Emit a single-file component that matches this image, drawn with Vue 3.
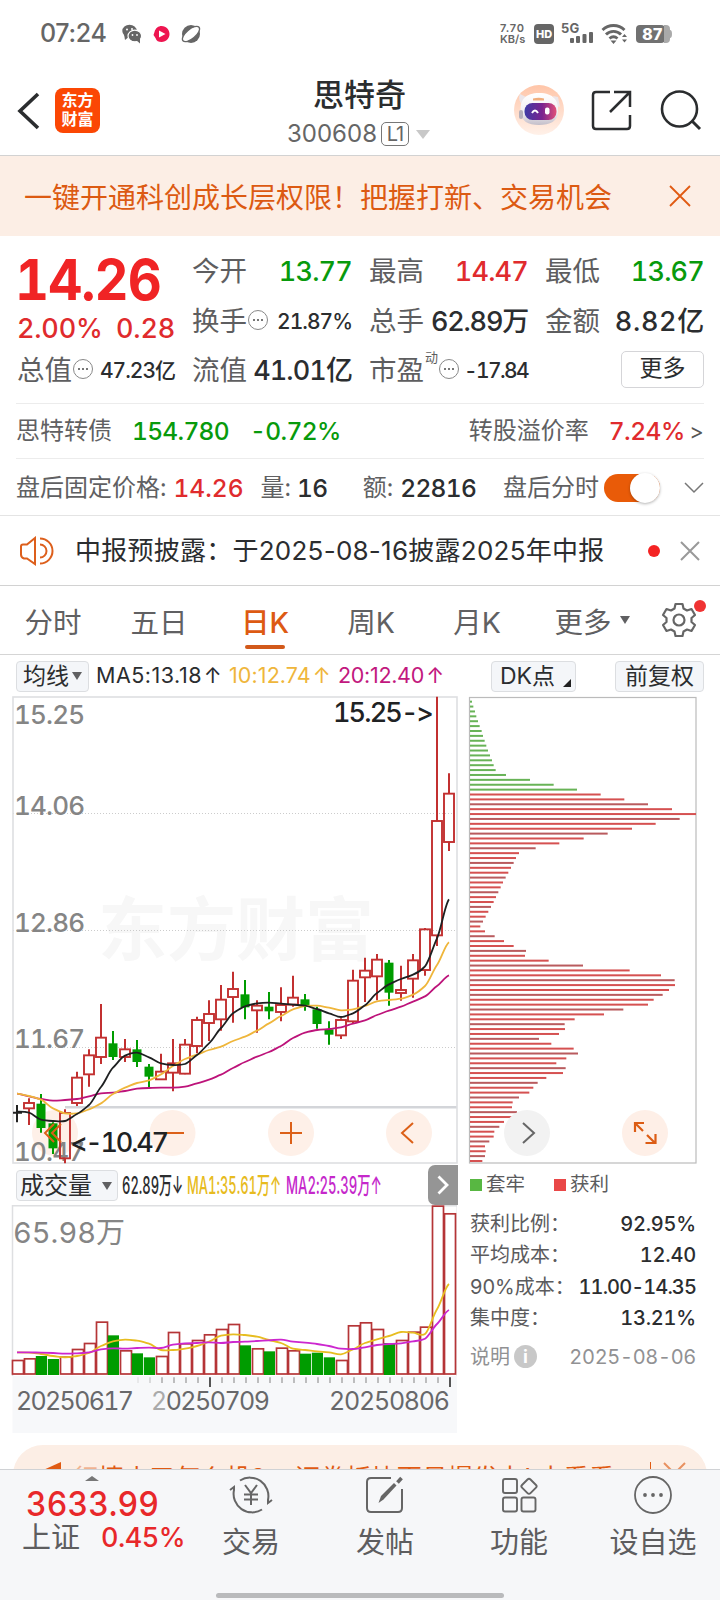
<script setup>
const candles = [
  ['k', 1245, 1268, 1268, 1297], ['r', 1225, 1239, 1255, 1305], ['g', 1212, 1241, 1314, 1328], ['g', 1297, 1300, 1375, 1392],
  ['r', 1258, 1269, 1405, 1420], ['r', 1145, 1163, 1239, 1248], ['r', 1078, 1096, 1153, 1190], ['r', 942, 1043, 1101, 1122],
  ['g', 1023, 1060, 1101, 1110], ['r', 1047, 1078, 1101, 1116], ['g', 1050, 1078, 1116, 1131], ['g', 1122, 1130, 1160, 1193],
  ['r', 1091, 1145, 1168, 1170], ['r', 1047, 1120, 1148, 1204], ['r', 1047, 1064, 1151, 1153], ['r', 980, 990, 1068, 1090],
  ['r', 931, 972, 999, 1053], ['r', 885, 929, 988, 1022], ['r', 845, 897, 921, 998], ['g', 870, 913, 952, 988],
  ['r', 931, 947, 961, 1028], ['g', 906, 950, 964, 988], ['r', 892, 945, 966, 994], ['r', 857, 923, 944, 950],
  ['g', 912, 928, 945, 962], ['g', 950, 958, 1002, 1016], ['g', 994, 1018, 1034, 1064], ['r', 985, 990, 1036, 1047],
  ['r', 839, 872, 994, 1000], ['r', 803, 842, 862, 936], ['r', 792, 809, 859, 931], ['g', 810, 818, 908, 947],
  ['r', 827, 900, 909, 932], ['r', 792, 811, 866, 923], ['r', 714, 718, 840, 857], ['r', 20, 393, 736, 768], ['r', 250, 311, 456, 483]
].map(([t, h, a, b, l], i) => ({ t, x: 17 + i * 12, h: h / 3, a: a / 3, b: b / 3, l: l / 3 }))

const volumes = [600, 595, 588, 597, 590, 567, 549, 485, 526, 571, 580, 592, 588, 516, 550, 540, 523, 507, 492, 556, 565, 574, 563, 571, 581, 578, 592, 600, 496, 487, 507, 549, 540, 515, 500, 137, 160]
  .map((v, i) => ({ x: 17.3 + i * 12, y: v / 3, green: [2, 3, 8, 10, 11, 19, 21, 24, 25, 26, 31].includes(i) }))

const curve = (vals) => {
  const p = vals.map((v, i) => [17 + i * 12, v / 3])
  let d = `M${p[0]}`
  for (let i = 0; i < p.length - 1; i++) {
    const a = p[Math.max(0, i - 1)], b = p[i], c = p[i + 1], e = p[Math.min(p.length - 1, i + 2)]
    d += `C${b[0] + 4} ${b[1] + (c[1] - a[1]) / 8},${c[0] - 4} ${c[1] - (e[1] - b[1]) / 8},${c[0]} ${c[1]}`
  }
  return d
}
const ma5 = curve([1265, 1268, 1289, 1293, 1293, 1272, 1245, 1191, 1133, 1097, 1088, 1102, 1120, 1125, 1122, 1095, 1060, 1014, 970, 949, 940, 938, 941, 944, 947, 957, 970, 981, 970, 946, 909, 883, 867, 854, 829, 745, 628])
const ma10 = curve([1211, 1218, 1229, 1255, 1270, 1270, 1258, 1240, 1212, 1193, 1179, 1171, 1153, 1128, 1107, 1094, 1080, 1070, 1053, 1040, 1022, 1000, 978, 958, 948, 947, 953, 961, 958, 948, 934, 930, 926, 914, 888, 825, 757])
const ma20 = curve([1211, 1219, 1227, 1232, 1230, 1227, 1219, 1210, 1208, 1203, 1196, 1194, 1193, 1193, 1190, 1180, 1169, 1154, 1134, 1116, 1100, 1086, 1068, 1044, 1028, 1020, 1017, 1012, 1001, 991, 975, 962, 950, 935, 919, 888, 856])
const vma1 = curve([577, 578, 582, 588, 592, 588, 579, 558, 544, 539, 542, 551, 570, 570, 566, 558, 545, 527, 523, 525, 530, 540, 549, 566, 570, 574, 577, 583, 568, 549, 538, 528, 516, 518, 522, 448, 372])
const vma2 = curve([577, 577, 578, 579, 581, 580, 577, 568, 565, 566, 564, 563, 564, 554, 550, 549, 547, 549, 546, 545, 543, 541, 539, 545, 548, 552, 558, 566, 567, 562, 555, 552, 550, 544, 536, 492, 450])

const chips = [36, 40, 45, 49, 54, 59, 65, 69, 74, 79, 84, 90, 96, 101, 107, 138, 210, 281, 351,
  422, 493, 564, 636, 708, 659, 587, 516, 443, 371, 298, 227, 177, 168, 161, 153, 145, 137, 129, 122, 115, 108, 101, 93, 85, 77, 69, 61, 75, 104, 132, 161, 198, 195, 266, 369, 509, 603, 644, 645, 627, 608, 581, 564, 490, 432, 344, 314, 315, 297, 237, 274, 341, 354, 319, 289, 317, 309, 259, 233, 220, 208, 177, 158, 156, 171, 160, 132, 118, 103, 101, 88, 75, 77, 75, 67]
  .map((e, i) => ({ y: (35 + i * 14.66) / 3 - 1, w: (e - 30) / 3, green: i < 19 }))

const ticks = Array.from({ length: 27 }, (_, i) => ({ x: 138 + i * 12, long: i === 6 || i === 26, o: i === 0 ? 0.25 : i === 1 ? 0.5 : 1 }))
const tabs = ['分时', '五日', '日K', '周K', '月K', '更多']
const stats = [['获利比例：', '92.95%'], ['平均成本：', '12.40'], ['90%成本：', '11.00-14.35'], ['集中度：', '13.21%']]
</script>

<template>
  <div class="page">
    <div class="status">
      <span class="time">07:24</span>
      <svg class="s-left" width="84" height="24" viewBox="0 0 84 24">
        <g fill="#666">
          <ellipse cx="7.500" cy="9" rx="7.200" ry="6.300" /><path d="M2 12l1 6 5-4z" />
          <ellipse cx="12.800" cy="14" rx="6.800" ry="5.800" stroke="#fff" stroke-width="1.200" /><path d="M14 18l4 3.500v-5z" />
        </g>
        <g fill="#fff"><circle cx="5" cy="7.500" r="1" /><circle cx="10" cy="7" r="1" /><circle cx="10.500" cy="13" r=".9" /><circle cx="15" cy="13" r=".9" /></g>
        <path d="M39.500 4c5 0 8 4 8 8s-3 8-8 8c-3 0-5-1-6-4l-2-3 1-3c1-4 4-6 7-6z" fill="#ee1550" /><path d="M37 8.500l6.500 3.500-6.500 3.500z" fill="#fff" />
        <circle cx="69" cy="12" r="9" fill="#666" /><ellipse cx="69" cy="12" rx="10.500" ry="4.700" transform="rotate(-40 69 12)" fill="#fff" stroke="#666" stroke-width="1.300" />
      </svg>
      <div class="speed"><span>7.70</span><span>KB/s</span></div>
      <span class="hd">HD</span>
      <svg class="s-right" width="120" height="28" viewBox="0 0 120 28">
        <text x="0" y="13" font-size="13" font-weight="700" fill="#666">5G</text>
        <g fill="#666"><rect x="9" y="18" width="4" height="5" rx="1" /><rect x="15" y="16" width="4" height="7" rx="1" /><rect x="21.500" y="14" width="4" height="9" rx="1" /><rect x="28" y="12" width="4" height="11" rx="1" /></g>
        <g fill="none" stroke="#666" stroke-width="2.800"><path d="M41.500 10c6-6 16-6 22 0" /><path d="M45 14.500c4-4.300 11-4.300 15 0" /><path d="M48.500 18.500c2.500-2.300 5.500-2.300 8 0" /></g>
        <path d="M49.500 20.500h6l-3 3.500zM61 17l2.500-3 2.500 3zM61 19.500l2.500 3 2.500-3z" fill="#666" />
        <rect x="75" y="5" width="29" height="18" rx="4" fill="#717171" /><path d="M103 5h2a4 4 0 0 1 4 4v1q2 0 2 4t-2 4v1a4 4 0 0 1-4 4h-2z" fill="#aaa" />
        <text x="91.500" y="20" text-anchor="middle" font-size="16" font-weight="800" fill="#fff">87</text>
      </svg>
    </div>

    <header class="header">
      <svg class="back" width="24" height="38" viewBox="0 0 24 38"><path d="M21 2L3 19l18 17" fill="none" stroke="#2b2d2f" stroke-width="3.600" /></svg>
      <div class="logo"><span>东方</span><span>财富</span></div>
      <div class="title">
        <div class="name">思特奇</div>
        <div class="code"><span>300608</span><span class="lv">L1</span><i class="tri"></i></div>
      </div>
      <svg class="h-icons" width="190" height="54" viewBox="0 0 190 54">
        <defs>
          <linearGradient id="halo" x2="0" y2="1"><stop stop-color="#ffc5a8" /><stop offset="1" stop-color="#fff1e9" /></linearGradient>
          <linearGradient id="visor"><stop stop-color="#3e3ba5" /><stop offset=".55" stop-color="#7a248f" /><stop offset="1" stop-color="#e24f78" /></linearGradient>
          <linearGradient id="shell" x2="0" y2="1"><stop stop-color="#fff" /><stop offset=".6" stop-color="#f2eff3" /><stop offset="1" stop-color="#c3bec9" /></linearGradient>
        </defs>
        <circle cx="26" cy="27" r="25" fill="url(#halo)" />
        <path d="M7 11l8 4-4 8c-4-3-6-7-4-12zM40 13l5 1 2 10-4-1z" fill="#ece6ea" />
        <path d="M8 29c-2-12 5-19 18-19 15 0 20 8 19 19 0 9-8 13-19 13S8 38 8 29z" fill="url(#shell)" />
        <rect x="6" y="27" width="4" height="9" rx="2" fill="#b5afba" /><path d="M20 15.500q6-1.500 11 0v2H20z" fill="#f0ad7c" />
        <rect x="11.500" y="20" width="32" height="17" rx="8" fill="url(#visor)" /><path d="M19 30q3-5 6 0" fill="none" stroke="#fff" stroke-width="2" /><rect x="32" y="24.500" width="4.500" height="7" rx="2" fill="#fff" />
        <g fill="none" stroke="#2b2d2f" stroke-width="2.500" transform="translate(3 0)"><path d="M94 9H80q-3 0-3 3v31q0 3 3 3h31q3 0 3-3V32" /><path d="M98 9h16v15M113.500 9.500L94 29" /></g>
        <circle cx="166.500" cy="26" r="17.500" fill="none" stroke="#2b2d2f" stroke-width="2.600" /><path d="M179 38l8 8" stroke="#2b2d2f" stroke-width="3" />
      </svg>
    </header>

    <div class="banner">
      <span>一键开通科创成长层权限！把握打新、交易机会</span>
      <svg width="24" height="24" viewBox="0 0 24 24"><path d="M2 2l20 20M22 2L2 22" stroke="#e05a12" stroke-width="1.800" /></svg>
    </div>

    <section class="quote">
      <div class="big">14.26</div>
      <div class="change"><span>2.00%</span><span>0.28</span></div>
      <div class="cell a1"><label>今开</label><b class="green">13.77</b></div>
      <div class="cell a2"><label>最高</label><b class="red">14.47</b></div>
      <div class="cell a3"><label>最低</label><b class="green">13.67</b></div>
      <div class="cell b1"><label>换手<i class="dots"></i></label><b class="sm">21.87%</b></div>
      <div class="cell b2"><label>总手</label><b>62.89万</b></div>
      <div class="cell b3"><label>金额</label><b>8.82亿</b></div>
      <div class="cell c0"><label>总值<i class="dots"></i></label><b class="sm">47.23亿</b></div>
      <div class="cell c1"><label>流值</label><b>41.01亿</b></div>
      <div class="cell c2"><label>市盈<sup>动</sup><i class="dots"></i></label><b class="sm">-17.84</b></div>
      <div class="cell c3"><button class="more">更多</button></div>
    </section>

    <div class="row bond">
      <span class="lbl">思特转债</span><b class="green p1">154.780</b><b class="green p2">-0.72%</b>
      <span class="lbl push">转股溢价率</span><b class="red p3">7.24%</b><span class="gt">&gt;</span>
    </div>
    <div class="row after">
      <span class="lbl">盘后固定价格:</span><b class="red q1">14.26</b><span class="lbl q2">量:</span><b class="q3">16</b>
      <span class="lbl q4">额:</span><b class="q5">22816</b><span class="lbl q6">盘后分时</span><i class="toggle"></i>
      <svg class="chev" width="20" height="12" viewBox="0 0 20 12"><path d="M1 1l9 9 9-9" fill="none" stroke="#777" stroke-width="1.500" /></svg>
    </div>
    <div class="notice">
      <svg width="36" height="30" viewBox="0 0 36 30"><g fill="none" stroke="#dd5f1c" stroke-width="2"><path d="M3 10.500Q3 8.500 5 8.500h4L17 2v26l-8-5.500H6q-3-1-3-4zM22 2.500a12.500 12.500 0 0 1 0 25M22 8.500a6.500 6.500 0 0 1 0 13" /></g></svg>
      <span class="ntext">中报预披露：于2025-08-16披露2025年中报</span>
      <i class="dot"></i>
      <svg class="nx" width="20" height="20" viewBox="0 0 20 20"><path d="M1 1l18 18M19 1L1 19" stroke="#999" stroke-width="2" /></svg>
    </div>

    <nav class="tabs">
      <div v-for="(t, i) in tabs" :key="t" class="tab" :class="{ on: i === 2 }">{{ t }}<i v-if="i === 5" class="caret"></i></div>
      <div class="gear">
        <svg width="36" height="36" viewBox="0 0 36 36"><g fill="none" stroke="#666" stroke-width="2.200" stroke-linejoin="round"><path d="M14.500 2h7l1 4.500 3.500 2 4.500-1.500 3.500 6-3.500 3v4l3.500 3-3.500 6-4.500-1.500-3.500 2-1 4.500h-7l-1-4.500-3.500-2-4.500 1.500-3.500-6 3.500-3v-4L2 13l3.500-6L10 8.500l3.500-2z" /><circle cx="18" cy="18" r="5.500" /></g></svg>
        <i></i>
      </div>
    </nav>

    <div class="legend">
      <span class="chip avg">均线<i class="caret"></i></span>
      <span class="m m5">MA5:13.18<em>↑</em></span><span class="m m10">10:12.74<em>↑</em></span><span class="m m20">20:12.40<em>↑</em></span>
      <span class="chip dk">DK点<i></i></span><span class="chip fq">前复权</span>
    </div>

    <div class="charts">
      <svg width="720" height="475" viewBox="0 2 720 475">
        <text x="98" y="265" class="wm" textLength="276" lengthAdjust="spacingAndGlyphs">东方财富</text>
        <g stroke="#ccc" stroke-dasharray="1 2"><path d="M13 123.500H457M13 240.500H457M13 357.500H457" /></g>
        <path d="M65 417.300H457" stroke="#d3d5d9" stroke-width="2.500" />
        <rect x="13" y="7" width="444" height="466" fill="none" stroke="#dedfe1" stroke-width="1.600" />
        <g fill="#fef0e8"><circle v-for="x in [55, 172.5, 291, 409]" :key="x" :cx="x" cy="443" r="23" /></g>
        <g class="ylab"><text x="14" y="34">15.25</text><text x="14" y="125">14.06</text><text x="14" y="242">12.86</text><text x="14" y="358">11.67</text><text x="14" y="471">10.47</text></g>
        <g v-for="c in candles" :key="c.x">
          <template v-if="c.t === 'r'">
            <path :d="`M${c.x} ${c.h}V${c.a}M${c.x} ${c.b}V${c.l}`" stroke="#c23030" stroke-width="2" />
            <rect :x="c.x - 5" :y="c.a" width="10" :height="Math.max(2, c.b - c.a)" fill="none" stroke="#c23030" stroke-width="1.900" />
          </template>
          <template v-else-if="c.t === 'g'">
            <path :d="`M${c.x} ${c.h}V${c.l}`" stroke="#009c00" stroke-width="2" />
            <rect :x="c.x - 4.500" :y="c.a" width="9" :height="c.b - c.a" fill="#009c00" />
          </template>
          <path v-else :d="`M${c.x} ${c.h}V${c.l}M${c.x - 4} ${c.a}h9`" stroke="#222" stroke-width="2" />
        </g>
        <g fill="none" stroke-width="1.800"><path :d="ma20" stroke="#bd137a" /><path :d="ma10" stroke="#efb63b" /><path :d="ma5" stroke="#1e2021" /></g>
        <g fill="none" stroke="#dc6018" stroke-width="2"><path d="M54 434l-9 9 9 9M61 434l-9 9 9 9M162 443h22M280 443h22M291 432v22M413 433l-11 10 11 10" /></g>
        <text x="333" y="32" class="mark" textLength="101">15.25-&gt;</text>
        <text x="70" y="462" class="mark" textLength="99">&lt;-10.47</text>

        <rect x="469.500" y="7.500" width="226.500" height="465.500" fill="none" stroke="#bbb" stroke-width="1.200" />
        <rect v-for="(c, i) in chips" :key="i" x="470" :y="c.y" :width="c.w" height="2" :fill="c.green ? '#68b357' : (i % 3 ? '#d55151' : '#b95b5e')" />
        <circle cx="527" cy="443" r="23" fill="#f2f2f2" /><path d="M523 433l11 10-11 10" fill="none" stroke="#666" stroke-width="2" />
        <circle cx="645" cy="443" r="23" fill="#feefe7" />
        <path d="M635 442v-9h9M635 433l8 8M655.500 444v9h-10M655 453l-8-8" fill="none" stroke="#dc5c14" stroke-width="2.200" />
      </svg>
    </div>

    <div class="lower">
      <div class="vol">
        <div class="vhead">
          <span class="chip cj">成交量<i class="caret"></i></span>
          <span class="v v0">62.89万↓</span><span class="v v1">MA1:35.61万↑</span><span class="v v2">MA2:25.39万↑</span>
          <span class="next"><svg width="12" height="20" viewBox="0 0 12 20"><path d="M1.500 1.500L10 10l-8.500 8.500" fill="none" stroke="#fff" stroke-width="2.800" /></svg></span>
        </div>
        <svg width="457" height="268" viewBox="0 42 457 268">
          <rect x="12.500" y="216" width="445" height="57" fill="#f7f8fa" />
          <path d="M12.500 216V45.700H457.300V216" fill="none" stroke="#dedfe1" stroke-width="1.500" />
          <g v-for="v in volumes" :key="v.x">
            <rect v-if="v.green" :x="v.x - 5.500" :y="v.y" width="11.200" :height="215 - v.y" fill="#009c00" />
            <rect v-else :x="v.x - 4.800" :y="v.y + .5" width="11" :height="213.500 - v.y" fill="#fff" stroke="#b53537" stroke-width="1.700" />
          </g>
          <g fill="none" stroke-width="1.800"><path :d="vma1" stroke="#e7bd20" /><path :d="vma2" stroke="#cc27cf" /></g>
          <path v-for="t in ticks" :key="t.x" :d="`M${t.x} 217.300V${t.long ? 227 : 223}`" :stroke="t.long ? '#555' : '#aaa'" :opacity="t.o" :stroke-width="t.long ? 2 : 1.500" />
          <text x="13" y="83" class="vmax" textLength="112">65.98万</text>
          <g class="dates"><text x="16" y="250" textLength="118">20250617</text><text x="151" y="250" textLength="119"><tspan fill="#aaa">2</tspan>0250709</text><text x="329" y="250" textLength="121">20250806</text></g>
        </svg>
      </div>
      <div class="cost">
        <div class="keys"><i class="kg"></i><span>套牢</span><i class="kr"></i><span>获利</span></div>
        <div v-for="(s, i) in stats" :key="s[0]" class="st"><span>{{ s[0] }}</span><b :class="{ range: i === 2 }">{{ s[1] }}</b></div>
        <div class="st last"><span>说明<i>i</i></span><b>2025-08-06</b></div>
      </div>
    </div>

    <div class="promo">
      <svg width="30" height="26" viewBox="0 0 30 26"><path d="M0 9L20 0v20z" fill="#e05a12" /></svg>
      <span class="ptext"><em>行</em>情来了怎么投？&ensp;&thinsp;证券板块更易爆发力! 去看看&gt;</span>
      <i></i>
      <svg class="px" width="24" height="24" viewBox="0 0 24 24"><path d="M1 1l21 21M22 1L1 22" stroke="#e8905f" stroke-width="2" /></svg>
    </div>

    <footer class="foot">
      <div class="index">
        <i></i><div class="pts">3633.99</div>
        <div class="sz"><span>上证</span><b>0.45%</b></div>
      </div>
      <div class="fitem f1">
        <svg width="44" height="40" viewBox="0 0 44 40"><g fill="none" stroke="#666" stroke-width="2"><path d="M11 5.500A18.500 18.500 0 0 1 39 25v3l4-3M33 34.500A18.500 18.500 0 0 1 5 15v-3l-4 3" /><path d="M16 10l6 8 6-8M22 18v12M15 19.500h14M15 24.500h14" /></g></svg>
        <span>交易</span>
      </div>
      <div class="fitem f2">
        <svg width="44" height="40" viewBox="0 0 44 40"><g fill="none" stroke="#666" stroke-width="2"><path d="M28 3H8q-4 0-4 4v26q0 4 4 4h27q4 0 4-4V14" /><path d="M34.500 7.500l4-4.500" stroke-width="3.600" /></g><path d="M15.500 28l2.500-7L31 8l2.500 2.500L20.500 24.500z" fill="#666" /></svg>
        <span>发帖</span>
      </div>
      <div class="fitem f3">
        <svg width="44" height="40" viewBox="0 0 44 40"><g fill="none" stroke="#666" stroke-width="1.900"><rect x="6" y="4" width="14" height="14" rx="2" /><rect x="6" y="22.500" width="14" height="14" rx="2" /><rect x="24.500" y="22.500" width="14" height="14" rx="2" /><path d="M30.500 4.500Q32 3 33.500 4.500L39 10q1.300 1.300 0 2.600l-5.500 5.500q-1.500 1.500-3 0L25 12.600q-1.300-1.300 0-2.600z" /></g></svg>
        <span>功能</span>
      </div>
      <div class="fitem f4">
        <svg width="44" height="40" viewBox="0 0 44 40"><circle cx="22" cy="20" r="18" fill="none" stroke="#666" stroke-width="1.800" /><g fill="#666"><circle cx="14" cy="20" r="1.900" /><circle cx="22" cy="20" r="1.900" /><circle cx="30" cy="20" r="1.900" /></g></svg>
        <span>设自选</span>
      </div>
      <div class="home"></div>
    </footer>
  </div>
</template>

<style>
body { background: #fff; }
</style>
<style scoped>
.page { width: 720px; height: 1600px; overflow: hidden; background: #fff; color: #2b2d2f; font-family: Inter, "Noto Sans CJK SC", sans-serif; font-feature-settings: "tnum" 1, "calt" 0; line-height: 1; white-space: nowrap; display: flex; flex-direction: column; }
.page > * { flex: none; box-sizing: border-box; }
i, em { font-style: normal; }
b { font-weight: 500; }
svg { display: block; flex: none; }
.red { color: #e02b2d; }
.green { color: #089a0c; }
.time, .code, .ntext, .legend, .speed { font-feature-settings: "calt" 0; }

.status { height: 66px; display: flex; align-items: center; padding: 1px 0 0 40px; color: #666; }
.time { width: 66px; font-size: 25px; font-weight: 500; letter-spacing: -.3px; }
.s-left { margin-left: 16px; }
.speed { margin-left: 294px; width: 26px; display: flex; flex-direction: column; font-size: 11px; line-height: 11px; font-weight: 600; }
.speed span:first-child { letter-spacing: .8px; }
.hd { margin-left: 8px; width: 20px; height: 20px; border-radius: 4px; background: #666; color: #fff; font-size: 11px; font-weight: 800; line-height: 20px; text-align: center; }
.s-right { margin-left: 7px; }

.header { height: 90px; border-bottom: 1px solid #d2d2d2; display: flex; position: relative; }
.back { margin: 26px 0 0 17px; }
.logo { margin: 22px 0 0 14px; width: 45px; height: 45px; border-radius: 8px; background: #fb4704; color: #fff; font-size: 16px; font-weight: 700; line-height: 19px; padding-top: 3px; box-sizing: border-box; display: flex; flex-direction: column; align-items: center; }
.title { width: 160px; margin-left: 187px; display: flex; flex-direction: column; }
.name { margin: 13px 0 0 26px; font-size: 31px; font-weight: 500; line-height: 31px; }
.code { display: flex; align-items: center; height: 28px; margin-top: 10px; color: #666; font-size: 24px; }
.lv { margin-left: 4px; width: 26px; height: 22px; border: 1px solid #777; border-radius: 5px; font-size: 20px; line-height: 23px; text-align: center; letter-spacing: -1px; }
.tri { margin-left: 7px; border: 7px solid transparent; border-top: 9px solid #c8c8c8; border-bottom: 0; }
.h-icons { margin: 17px 0 0 66px; }

.banner { height: 80px; background: #fceee5; display: flex; align-items: center; justify-content: space-between; padding: 0 28px 0 24px; color: #dc5a12; font-size: 28px; }
.banner span { padding-top: 3px; }

.quote { height: 167px; position: relative; display: grid; grid-template-columns: 158px 160px 159px 159px; column-gap: 17px; grid-template-rows: 50px 50px 48px; padding: 10px 0 0 17px; }
.cell { display: flex; justify-content: space-between; align-items: center; }
.cell b { font-size: 27px; letter-spacing: -.8px; }
.cell b.sm { font-size: 21px; letter-spacing: -1px; }
.cell.c0 b.sm { letter-spacing: -1px; }
.cell.c2 b.sm { letter-spacing: -1.6px; }
.b2 b { letter-spacing: -1.2px; }
.cell.b3 b { letter-spacing: .7px; margin-right: -1px; }
.cell.c1 b { letter-spacing: -.9px; }
label { font-size: 27.500px; color: #5e5e60; display: flex; align-items: center; padding-top: 1px; }
.a1 { grid-area: 1/2; } .a2 { grid-area: 1/3; } .a3 { grid-area: 1/4; }
.b1 { grid-area: 2/2; } .b2 { grid-area: 2/3; } .b3 { grid-area: 2/4; }
.c0 { grid-area: 3/1; } .c1 { grid-area: 3/2; } .c2 { grid-area: 3/3; } .c3 { grid-area: 3/4; justify-content: flex-end; }
.big { grid-area: 1/1/3/2; font-size: 57px; font-weight: 700; color: #f02425; line-height: 68px; height: 68px; margin-left: -2px; transform-origin: 0 0; transform: scaleX(.925); letter-spacing: -1px; }
.change { grid-area: 2/1; display: flex; justify-content: space-between; align-items: flex-end; font-size: 27px; font-weight: 500; color: #e02b2d; padding-bottom: 4px; letter-spacing: -.2px; }
.dots { width: 18px; height: 18px; border: 1px solid #888; border-radius: 50%; display: inline-block; margin-left: 1px; margin-top: -4px; background: radial-gradient(circle at 5px 9px, #777 1px, transparent 1.500px), radial-gradient(circle at 9px 9px, #777 1px, transparent 1.500px), radial-gradient(circle at 13px 9px, #777 1px, transparent 1.500px); }
sup { font-size: 13px; align-self: flex-start; margin: -6px 0 0 1px; }
.more { width: 83px; height: 37px; box-sizing: border-box; border: 1px solid #d5d5d8; border-radius: 5px; background: #fff; font: 23px/30px Inter, "Noto Sans CJK SC", sans-serif; color: #2b2d2f; padding: 0 0 2px; }
.c3 { padding-bottom: 2px; }

.row { margin: 0 16px; border-top: 1px solid #ececec; display: flex; align-items: center; }
.lbl { color: #606062; font-size: 24px; }
.row b { font-size: 24.500px; }
.bond { height: 55px; }
.row .p1 { margin-left: 20px; letter-spacing: -.7px; } .row .p2 { margin-left: 21px; letter-spacing: -.6px; }
.push { margin-left: auto; } .row .p3 { margin-left: 20px; letter-spacing: -.5px; }
.gt { font-size: 22px; margin-left: 5px; color: #555; }
.after { height: 57px; }
.after > * { position: relative; top: 1px; }
.q1 { margin-left: 7px; } .q2 { margin-left: 17px; } .q3 { margin-left: 6px; letter-spacing: -.5px; } .q4 { margin-left: 35px; } .q5 { margin-left: 7px; letter-spacing: -.7px; } .q6 { margin-left: 27px; }
.toggle { width: 56px; height: 28px; border-radius: 14px; background: #e95b08; margin-left: 5px; }
.toggle::after { content: ""; position: absolute; right: 0; top: -1px; width: 30px; height: 30px; border-radius: 50%; background: #fff; box-shadow: 0 1px 3px rgba(0,0,0,.3); }
.chev { margin-left: auto; }
.notice { height: 71px; border-top: 1px solid #e4e4e4; border-bottom: 1px solid #d2d2d2; display: flex; align-items: center; padding: 0 20px 0 18px; }
.ntext { margin-left: 21px; font-size: 26px; letter-spacing: .25px; }
.dot { margin-left: auto; width: 12px; height: 12px; border-radius: 50%; background: #f42323; }
.nx { margin-left: 20px; }
.tabs { height: 69px; border-bottom: 1px solid #d5d5d5; display: flex; }
.tab { width: 106px; height: 68px; display: flex; align-items: center; justify-content: center; font-size: 28.500px; color: #606062; position: relative; padding-top: 6px; box-sizing: border-box; }
.tab.on { color: #dd5a13; font-weight: 500; }
.tab.on::after { content: ""; position: absolute; bottom: 5px; left: 33px; width: 40px; height: 4px; border-radius: 2px; background: #d2591a; }
.caret { border: 5px solid transparent; border-top: 8px solid #606062; border-bottom: 0; }
.tab .caret { position: absolute; right: 6px; top: 30px; }
.gear { position: relative; margin: 16px 0 0 25px; width: 36px; height: 36px; }
.gear i { position: absolute; right: -9px; top: -2px; width: 12px; height: 12px; border-radius: 50%; background: #f03333; }

.legend { height: 37px; padding: 5px 16px 0; display: flex; align-items: center; }
.chip { box-sizing: border-box; height: 31px; border: 1px solid #dcdee1; border-radius: 4px; background: #f4f6f9; font-size: 23px; display: flex; align-items: center; padding-left: 6px; position: relative; flex: none; }
.avg { width: 73px; } .avg .caret { margin-left: 3px; }
.m { font-size: 21.500px; display: flex; align-items: center; letter-spacing: .1px; flex: none; }
.m em { width: 16px; margin-left: 3px; display: flex; justify-content: center; }
.m5 { margin-left: 7px; width: 133px; letter-spacing: .5px; } .m10 { width: 109px; color: #efb63b; } .m20 { color: #c2187e; letter-spacing: -.3px; }
.dk { margin-left: auto; width: 85px; padding-left: 8px; }
.dk i { position: absolute; right: 4px; bottom: 4px; border-left: 8px solid transparent; border-bottom: 8px solid #222; }
.fq { width: 89px; margin-left: 39px; padding-left: 9px; }
.charts { height: 475px; }
.wm { font-size: 69px; font-weight: 700; fill: #f7f7f7; }
.ylab { font-size: 26px; font-weight: 500; fill: #858585; letter-spacing: -.8px; }
.mark { font-size: 27px; fill: #202224; font-weight: 500; }

.lower { display: flex; height: 280px; margin-top: -2px; }
.vol { width: 458px; }
.vhead { height: 37px; box-sizing: border-box; display: flex; align-items: center; padding: 4px 0 0 16px; position: relative; }
.cj { width: 102px; padding-left: 3px; font-size: 24px; } .cj .caret { margin-left: 10px; }
.v { font-size: 24px; transform: scaleX(.54); transform-origin: 0 50%; flex: none; font-weight: 500; }
.v0 { width: 61px; margin-left: 4px; } .v1 { width: 98px; margin-left: 4px; color: #e7bb20; } .v2 { color: #c528cb; margin-left: 1px; transform: scaleX(.55); width: 100px; }
.next { position: absolute; right: 0; top: 0; width: 30px; height: 40px; background: #959595; border-radius: 7px 0 0 7px; display: flex; align-items: center; justify-content: center; }
.vmax { font-size: 29px; fill: #858585; }
.dates { font-size: 25px; fill: #68686a; }
.cost { width: 226px; padding: 4px 0 0 12px; }
.keys { display: flex; align-items: center; height: 32px; margin-bottom: 7px; font-size: 19.500px; color: #5b5b5d; }
.keys i { width: 12px; height: 12px; } .kg { background: #58b742; } .kr { background: #e94747; margin-left: 29px; } .keys span { margin-left: 4px; }
.st { display: flex; justify-content: space-between; align-items: center; height: 31.500px; font-size: 20px; color: #5b5b5d; }
.st > span { font-feature-settings: normal; }
.st b { color: #2b2d2f; font-size: 20px; font-weight: 500; letter-spacing: -.2px; }
.st b.range { letter-spacing: -.9px; }
.last { margin-top: 7px; color: #919193; } .st.last b { color: #919193; font-weight: 400; letter-spacing: -.3px; }
.last span { display: flex; align-items: center; } .last i { width: 23px; height: 23px; border-radius: 50%; background: #c8c8c8; color: #fff; text-align: center; line-height: 23px; font-size: 18px; margin-left: 4px; font-weight: 700; }

.promo { height: 54px; margin: 0 13px; border-radius: 30px 30px 0 0; background: #fceee5; position: relative; display: flex; padding: 17px 20px 0 28px; color: #e05a12; margin-bottom: -30px; font-size: 25.500px; line-height: 32px; }
.ptext { margin-left: 2px; width: 560px; overflow: hidden; } .ptext em { opacity: .4; }
.promo i { width: 1px; height: 24px; background: #e05a12; margin-left: 17px; }
.px { margin-left: 12px; }

.foot { height: 131px; border-top: 1px solid #d0d2d5; background: #f6f7f9; position: relative; display: flex; z-index: 1; color: #5d5d5f; }
.index { width: 184px; position: relative; }
.index i { position: absolute; left: 85px; top: 6px; border: 7px solid transparent; border-bottom: 5px solid #777; border-top: 0; }
.pts { margin: 16px 0 0 26px; font-size: 34px; font-weight: 500; color: #e8282a; transform: scaleX(.94); transform-origin: 0 0; line-height: 36px; }
.sz { display: flex; align-items: center; height: 30px; padding-left: 22px; font-size: 29px; } .sz b { color: #e8282a; font-size: 27px; margin-left: 21px; letter-spacing: -.5px; }
.fitem { width: 134px; padding-top: 5px; display: flex; flex-direction: column; align-items: center; font-size: 29px; }
.fitem span { margin-top: 13px; }
.home { position: absolute; left: 216px; bottom: 2px; width: 288px; height: 5px; border-radius: 3px; background: #b9babc; }
</style>
